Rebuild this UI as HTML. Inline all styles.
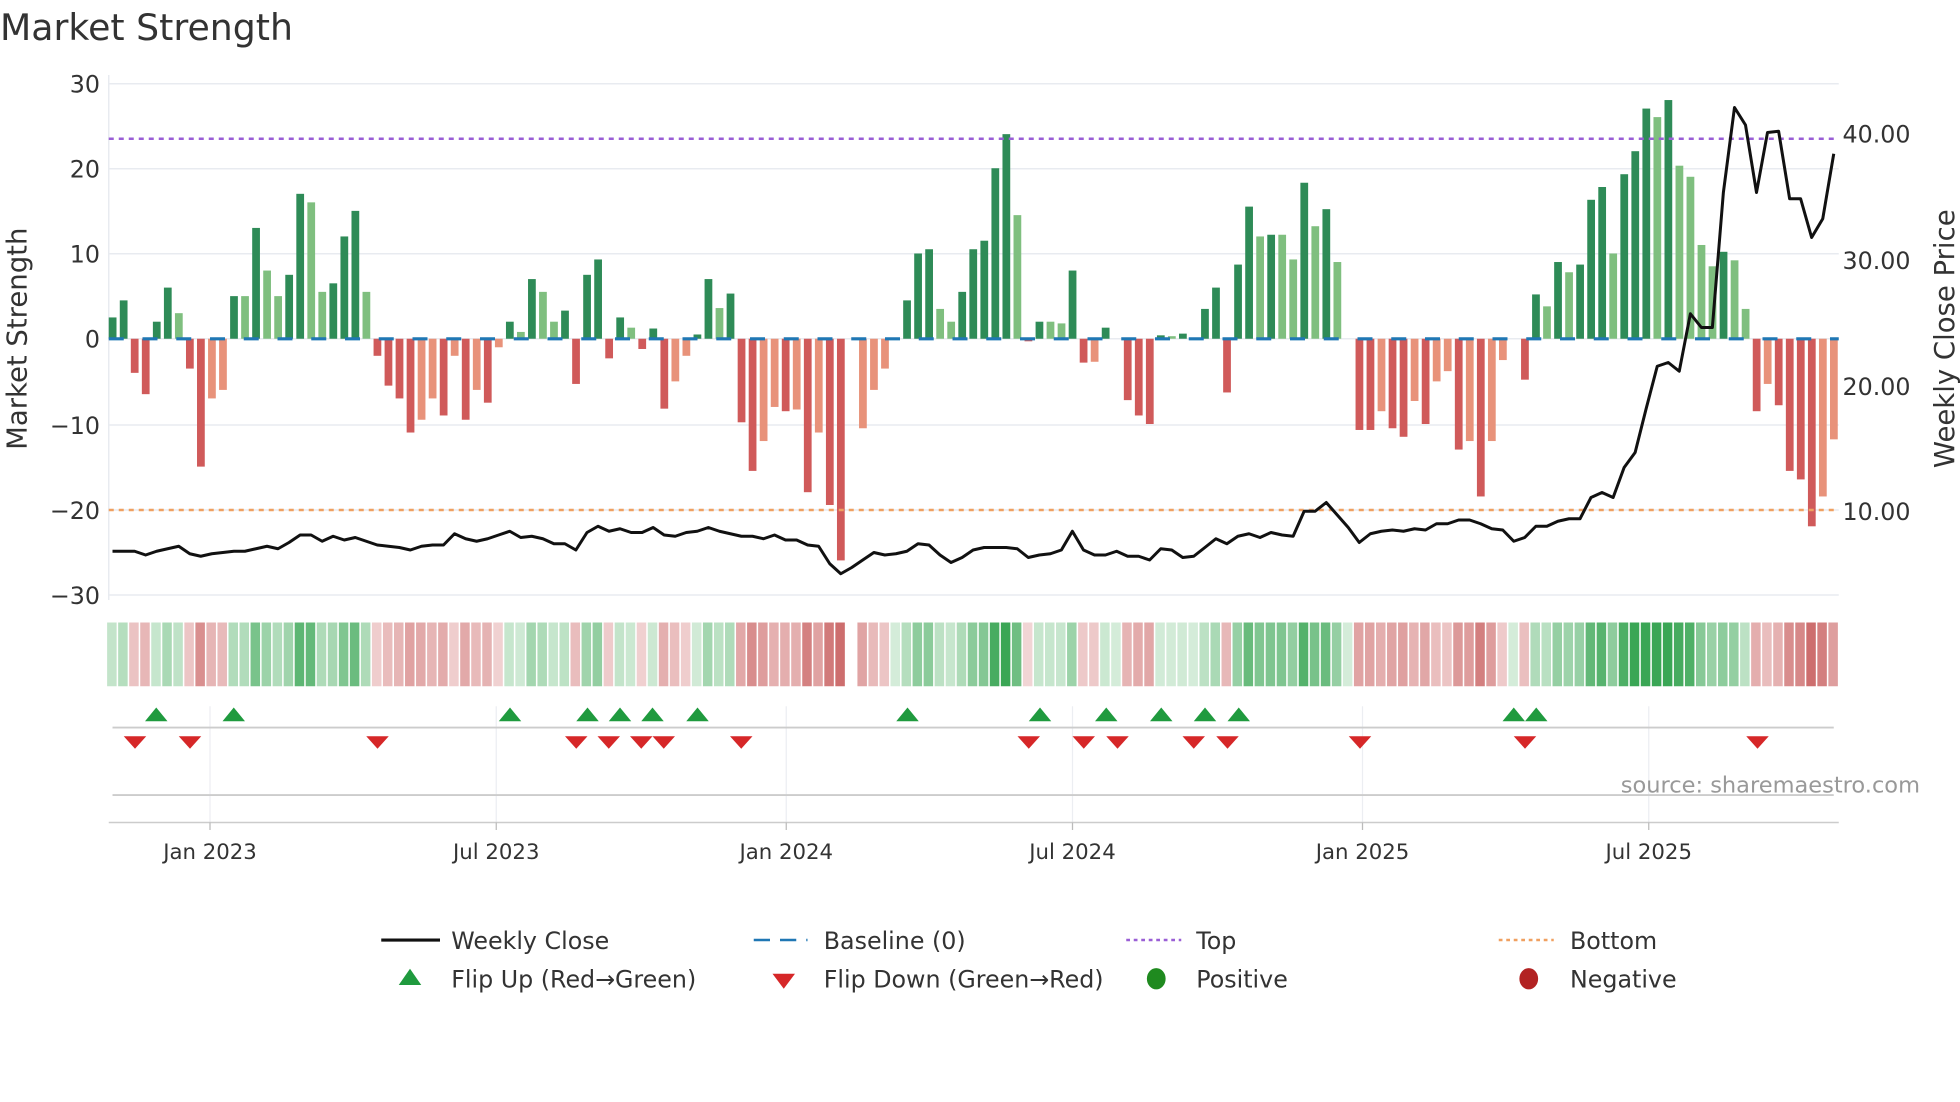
<!DOCTYPE html>
<html><head><meta charset="utf-8"><style>
html,body{margin:0;padding:0;background:#fff;width:1960px;height:1102px;overflow:hidden}
svg{display:block}
text{font-family:"DejaVu Sans","Liberation Sans",sans-serif;fill:#333}
</style></head><body>
<svg id="s" width="1960" height="1102" viewBox="0 0 1568 881.6" xmlns="http://www.w3.org/2000/svg">
<text x="0" y="32" font-size="29">Market Strength</text>
<g stroke="#e8ebf0" stroke-width="1.2">
<line x1="87" x2="1471" y1="67" y2="67"/><line x1="87" x2="1471" y1="135" y2="135"/><line x1="87" x2="1471" y1="203" y2="203"/><line x1="87" x2="1471" y1="271" y2="271"/><line x1="87" x2="1471" y1="340" y2="340"/><line x1="87" x2="1471" y1="408" y2="408"/><line x1="87" x2="1471" y1="476" y2="476"/>
<line x1="87" x2="87" y1="60" y2="480"/>
</g>
<g font-size="19" text-anchor="end">
<text x="80" y="74">30</text><text x="80" y="142">20</text><text x="80" y="210">10</text><text x="80" y="278">0</text><text x="80" y="347">−10</text><text x="80" y="415">−20</text><text x="80" y="483">−30</text>
</g>
<g font-size="19">
<text x="1474" y="114">40.00</text><text x="1474" y="215">30.00</text><text x="1474" y="316">20.00</text><text x="1474" y="416">10.00</text>
</g>
<text transform="translate(21,271) rotate(-90)" font-size="22" text-anchor="middle">Market Strength</text>
<text transform="translate(1563,271) rotate(-90)" font-size="22" text-anchor="middle">Weekly Close Price</text>
<g id="bars"></g>
<line x1="87" x2="1471" y1="271" y2="271" stroke="#1f77b4" stroke-width="2.5" stroke-dasharray="12,15"/>
<line x1="87" x2="1471" y1="111" y2="111" stroke="#9a5fd6" stroke-width="2" stroke-dasharray="4,4"/>
<line x1="87" x2="1471" y1="408" y2="408" stroke="#f0a060" stroke-width="2" stroke-dasharray="4,4"/>
<polyline id="price" fill="none" stroke="#111" stroke-width="2.4" stroke-linejoin="round"/>
<g id="heat"></g>
<g stroke="#eceef2" stroke-width="1">
<line x1="168" x2="168" y1="565" y2="658"/><line x1="397" x2="397" y1="565" y2="658"/><line x1="629" x2="629" y1="565" y2="658"/><line x1="858" x2="858" y1="565" y2="658"/><line x1="1090" x2="1090" y1="565" y2="658"/><line x1="1319" x2="1319" y1="565" y2="658"/>
</g>
<line x1="90" x2="1467" y1="582" y2="582" stroke="#ccc" stroke-width="1.5"/>
<line x1="90" x2="1467" y1="636" y2="636" stroke="#ccc" stroke-width="1.5"/>
<line x1="87" x2="1471" y1="658" y2="658" stroke="#ccc" stroke-width="1.2"/>
<g stroke="#bbb"><line x1="168" x2="168" y1="658" y2="664"/><line x1="397" x2="397" y1="658" y2="664"/><line x1="629" x2="629" y1="658" y2="664"/><line x1="858" x2="858" y1="658" y2="664"/><line x1="1090" x2="1090" y1="658" y2="664"/><line x1="1319" x2="1319" y1="658" y2="664"/></g>
<g id="marks"></g>
<text x="1536" y="634" font-size="18" text-anchor="end" style="fill:#999">source: sharemaestro.com</text>
<g font-size="17" text-anchor="middle">
<text x="168" y="687">Jan 2023</text><text x="397" y="687">Jul 2023</text><text x="629" y="687">Jan 2024</text><text x="858" y="687">Jul 2024</text><text x="1090" y="687">Jan 2025</text><text x="1319" y="687">Jul 2025</text>
</g>
<g font-size="19">
<line x1="305" x2="352" y1="752" y2="752" stroke="#111" stroke-width="2.5"/><text x="361" y="759">Weekly Close</text>
<line x1="603" x2="646" y1="752" y2="752" stroke="#1f77b4" stroke-width="2" stroke-dasharray="13,8"/><text x="659" y="759">Baseline (0)</text>
<line x1="901" x2="945" y1="752" y2="752" stroke="#9a5fd6" stroke-width="2" stroke-dasharray="3,3"/><text x="957" y="759">Top</text>
<line x1="1199" x2="1243" y1="752" y2="752" stroke="#f0a060" stroke-width="2" stroke-dasharray="3,3"/><text x="1256" y="759">Bottom</text>
<polygon points="319,788 337,788 328,775" fill="#1f9a3e"/><text x="361" y="790">Flip Up (Red→Green)</text>
<polygon points="618,779 636,779 627,791" fill="#d62728"/><text x="659" y="790">Flip Down (Green→Red)</text>
<ellipse cx="925" cy="783" rx="7.5" ry="8.5" fill="#1f8a1f"/><text x="957" y="790">Positive</text>
<ellipse cx="1223" cy="783" rx="7.5" ry="8.5" fill="#b22222"/><text x="1256" y="790">Negative</text>
</g>
</svg>
<script>
var v=[2.5,4.5,-4,-6.5,2,6,3,-3.5,-15,-7,-6,5,5,13,8,5,7.5,17,16,5.5,6.5,12,15,5.5,-2,-5.5,-7,-11,-9.5,-7,-9,-2,-9.5,-6,-7.5,-1,2,0.8,7,5.5,2,3.3,-5.3,7.5,9.3,-2.3,2.5,1.3,-1.2,1.2,-8.2,-5,-2,0.5,7,3.6,5.3,-9.8,-15.5,-12,-8,-8.5,-8.3,-18,-11,-19.5,-26,0,-10.5,-6,-3.5,0,4.5,10,10.5,3.5,2,5.5,10.5,11.5,20,24,14.5,-0.3,2,2,1.8,8,-2.8,-2.7,1.3,0,-7.2,-9,-10,0.4,0.3,0.6,0,3.5,6,-6.3,8.7,15.5,12,12.2,12.2,9.3,18.3,13.2,15.2,9,0,-10.7,-10.7,-8.5,-10.5,-11.5,-7.3,-10,-5,-3.8,-13,-12,-18.5,-12,-2.5,0,-4.8,5.2,3.8,9,7.8,8.7,16.3,17.8,10,19.3,22,27,26,28,20.3,19,11,8.5,10.2,9.2,3.5,-8.5,-5.3,-7.8,-15.5,-16.5,-22,-18.5,-11.8];
var light=[6,12,14,15,18,19,23,37,39,40,47,55,75,76,82,85,86,96,104,106,107,109,111,130,132,136,140,142,143,144,145,147,148];
var orange=[9,10,28,29,31,33,35,51,52,59,60,62,64,68,69,70,89,115,118,120,121,123,125,126,150,155,156];
var ns="http://www.w3.org/2000/svg",B=document.getElementById('bars'),H=document.getElementById('heat');
function el(t,a,p){var e=document.createElementNS(ns,t);for(var k in a)e.setAttribute(k,a[k]);p.appendChild(e);return e;}
var step=(1467-90)/156;
function mix(a,b,t){return 'rgb('+a.map(function(x,i){return Math.round(x+(b[i]-x)*t)}).join(',')+')';}
for(var i=0;i<v.length;i++){
 var x=90+step*i,val=v[i],h=Math.abs(val)*6.82,c;
 if(val>0)c=light.indexOf(i)>=0?'#7fbf7f':'#2e8b57';else c=orange.indexOf(i)>=0?'#e8927a':'#d05a5a';
 if(h>0.5)el('rect',{x:x-3,y:val>0?271-h:271,width:6.2,height:h,fill:c},B);
 if(i!=67){var t=Math.min(1,Math.abs(val)/22);
 var col=val>=0?mix([212,236,217],[58,166,85],t):mix([242,214,214],[205,110,110],t);
 el('rect',{x:x-4.3,y:498,width:7.6,height:51,fill:col},H);}
}
var py=[441,441,441,444,441,439,437,443,445,443,442,441,441,439,437,439,434,428,428,433,429,432,430,433,436,437,438,440,437,436,436,427,431,433,431,428,425,430,429,431,435,435,440,426,421,425,423,426,426,422,428,429,426,425,422,425,427,429,429,431,428,432,432,436,437,451,459,454,448,442,444,443,441,435,436,444,450,446,440,438,438,438,439,446,444,443,440,425,440,444,444,441,445,445,448,439,440,446,445,438,431,435,429,427,430,426,428,429,409,409,402,412,422,434,427,425,424,425,423,424,419,419,416,416,419,423,424,433,430,421,421,417,415,415,398,394,398,374,362,327,293,290,297,251,262,262,154,86,100,154,106,105,159,159,190,175,123];
document.getElementById('price').setAttribute('points',py.map(function(y,i){return (90+step*i).toFixed(1)+','+y}).join(' '));
var M=document.getElementById('marks');
[125,187,408,470,496,522,558,726,832,885,929,964,991,1211,1229].forEach(function(x){el('polygon',{points:(x-9)+',577 '+(x+9)+',577 '+x+',566',fill:'#1f9a3e'},M)});
[108,152,302,461,487,513,531,593,823,867,894,955,982,1088,1220,1406].forEach(function(x){el('polygon',{points:(x-9)+',589 '+(x+9)+',589 '+x+',599',fill:'#d62728'},M)});
</script>
</body></html>
